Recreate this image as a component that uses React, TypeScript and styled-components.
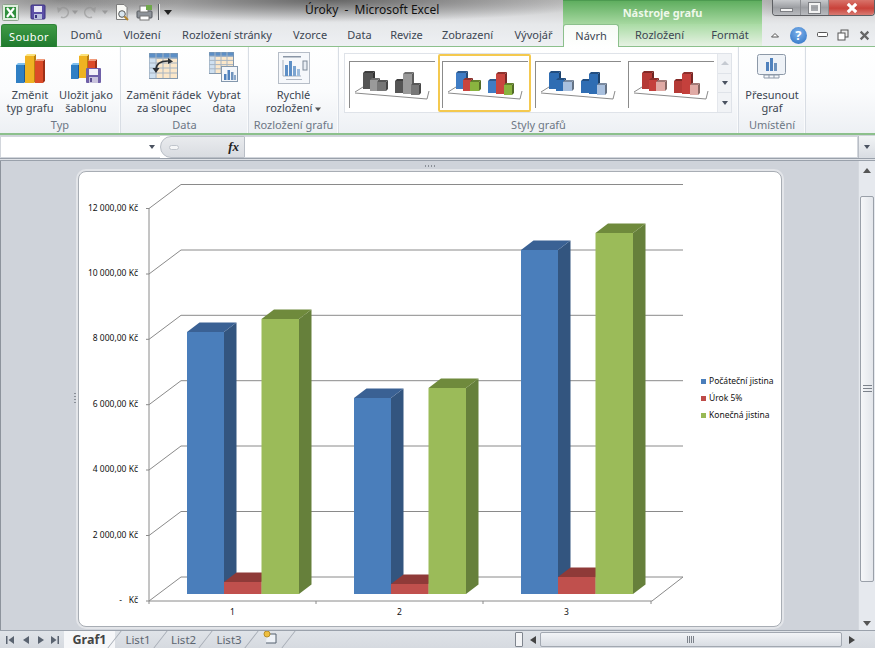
import React from "react";
import styled, { createGlobalStyle } from "styled-components";

const Global = createGlobalStyle`
  html, body { margin: 0; padding: 0; background: #cfd3da; }
  * { box-sizing: border-box; }
`;
const UI = `"Noto Sans", "Open Sans", sans-serif`;

const Page = styled.div`
  width: 875px; height: 648px; overflow: hidden; display: flex; flex-direction: column;
  font-family: ${UI}; font-size: 11px; color: #3b4450; background: #cfd3da;
`;
const TitleBar = styled.div`
  height: 24px; display: flex; flex: none;
  background:
    radial-gradient(ellipse 280px 22px at 330px 0, rgba(70,70,70,.75), rgba(90,90,90,0) 100%),
    radial-gradient(ellipse 120px 20px at 60px 0, rgba(90,90,90,.55), rgba(90,90,90,0) 100%),
    radial-gradient(ellipse 70px 20px at 800px 0, rgba(100,100,100,.4), rgba(90,90,90,0) 100%),
    linear-gradient(#c4c4c4, #e6e8ea);
`;
const Qat = styled.div`width: 305px; display: flex; align-items: center; flex: none; position: relative;`;
const QatSlot = styled.div<{ $w: number; $o?: number }>`
  width: ${p => p.$w}px; height: 22px; display: flex; align-items: center; justify-content: center;
  flex: none; opacity: ${p => p.$o ?? 1};
`;
const QatSep = styled.span`width: 1px; height: 16px; background: #5c6066; box-shadow: 1px 0 0 #e8e8e8;`;
const Title = styled.div`
  width: 258px; flex: none; line-height: 20px; font-size: 12px; color: #111; white-space: pre;
`;
const ContextHead = styled.div`
  width: 199px; flex: none; text-align: center; line-height: 24px; font-size: 11px; font-weight: 700;
  color: #eef8ea; background: linear-gradient(#5fae5f, #a6d8a0);
  border-top: 1px solid #4c9a50;
`;
const WinButtons = styled.div`
  margin-left: 10px; width: 103px; height: 16px; display: flex; flex: none;
  border: 1px solid #5d5f63; border-top: none; border-radius: 0 0 4px 4px; overflow: hidden;
`;
const WinBtn = styled.div<{ $w: number; $close?: boolean }>`
  width: ${p => p.$w}px; flex: none; display: flex; align-items: center; justify-content: center;
  border-right: 1px solid #8c8e92;
  background: ${p => p.$close
    ? "linear-gradient(#d8736a, #c9423a 55%, #d97b72)"
    : "linear-gradient(#c7c9cc, #9d9fa3 50%, #b9bbbf)"};
`;
const MinGlyph = styled.span`width: 13px; height: 4px; background: #f4f4f4; border: 1px solid #7d7f83; margin-top: 5px;`;
const MaxGlyph = styled.span`width: 11px; height: 10px; background: transparent; border: 2px solid #f2f2f2; outline: 1px solid #7d7f83;`;

const TabRow = styled.div`
  height: 23px; display: flex; flex: none; background: linear-gradient(#e6e8ea, #eef0f3);
  border-bottom: 1px solid #8cc08c; padding-left: 1px; position: relative;
`;
const FileTab = styled.div`
  width: 56px; height: 23px; text-align: center; line-height: 23px; font-size: 11px; color: #fff;
  letter-spacing: .4px; border-radius: 3px 3px 0 0; background: linear-gradient(#3f9a45, #1f7a2d);
  border: 1px solid #2f8438; border-bottom: none; flex: none;
`;
const Tab = styled.div<{ $w: number }>`
  width: ${p => p.$w}px; flex: none; text-align: center; line-height: 22px; color: #3c4652; font-size: 11px;
`;
const ContextTabs = styled.div`
  display: flex; width: 199px; flex: none; margin-left: 3px; background: linear-gradient(#a9dba4, #e6f2e3);
`;
const ActiveTab = styled(Tab)`
  height: 23px; background: linear-gradient(#f6fbf5, #ffffff); border: 1px solid #8cc08c; border-bottom: none;
  border-radius: 3px 3px 0 0; line-height: 21px; position: relative; z-index: 1;
`;
const HelpRow = styled.div`
  margin-left: auto; width: 113px; display: flex; align-items: center; justify-content: space-between;
  padding: 0 5px 0 8px;
`;
const HelpDot = styled.div`
  width: 17px; height: 17px; border-radius: 50%; color: #fff; font-weight: 700; font-size: 13px; line-height: 17px;
  text-align: center; background: radial-gradient(circle at 50% 35%, #7fb3ea, #2a6fc4);
`;

const Ribbon = styled.div`
  height: 88px; flex: none; display: flex; background: linear-gradient(#ffffff, #fbfcfd 50%, #edf0f4);
  border-bottom: 2px solid #8cc08c;
`;
const Group = styled.div<{ $w: number }>`
  width: ${p => p.$w}px; flex: none; display: flex; flex-direction: column; align-items: stretch;
  border-right: 1px solid #d8dde4; box-shadow: inset -1px 0 0 #fafbfc;
`;
const GroupBody = styled.div<{ $gap?: number; $pr?: number; $start?: boolean }>`
  height: 71px; display: flex; justify-content: ${p => p.$start ? "flex-start" : "center"};
  gap: ${p => p.$gap ?? 0}px; padding-right: ${p => p.$pr ?? 0}px; flex: none;
`;
const GroupLabel = styled.div`
  text-align: center; line-height: 14px; font-size: 11px; color: #6d7785; white-space: nowrap;
`;
const BigButton = styled.div<{ $w: number }>`
  width: ${p => p.$w}px; flex: none; display: flex; flex-direction: column; align-items: center; padding-top: 5px;
`;
const IconBox = styled.div`height: 36px; flex: none; display: flex; align-items: flex-start; justify-content: center;`;
const BtnText = styled.div`
  text-align: center; line-height: 13px; font-size: 11px; color: #3c4652; white-space: nowrap;
`;
const Gallery = styled.div`
  margin: 6px 0 0 5px; width: 388px; height: 60px; display: flex; border: 1px solid #dfe3e9; background: #fff; flex: none;
`;
const Thumb = styled.div<{ $on?: boolean }>`
  width: 93px; flex: none; height: 58px; background: #fff;
  outline: ${p => p.$on ? "2px solid #f4c94f" : "none"}; outline-offset: -2px; border-radius: 2px;
`;
const GalleryScroll = styled.div`
  width: 14px; flex: none; display: flex; flex-direction: column; border-left: 1px solid #e4e7ec; background: #f1f3f6;
`;
const GalleryBtn = styled.div`
  flex: 1; display: flex; align-items: center; justify-content: center; border-bottom: 1px solid #dfe3e9;
  &:last-child { border-bottom: none; }
`;
const Up = styled.span<{ $c?: string }>`width: 0; height: 0; border: 4px solid transparent; border-top: none; border-bottom: 4px solid ${p => p.$c ?? "#c5cad1"};`;
const Down = styled.span<{ $c?: string }>`width: 0; height: 0; border: 3.5px solid transparent; border-bottom: none; border-top: 4px solid ${p => p.$c ?? "#4a5260"};`;

const FormulaBar = styled.div`
  height: 23px; flex: none; display: flex; background: #fff; border-bottom: 1px solid #9aa1ab; margin-top: 1px;
`;
const NameBox = styled.div`width: 160px; flex: none; display: flex; align-items: center; justify-content: flex-end; padding-right: 5px; border: 1px solid #d2d6dc; border-right: none;`;
const FxBox = styled.div`
  width: 85px; flex: none; display: flex; align-items: center; justify-content: space-between; padding: 0 5px 0 6px;
  background: linear-gradient(#e9ebee, #d9dce1); border-radius: 11px 0 0 11px; border: 1px solid #b9bec6;
`;
const FxKnob = styled.span`width: 10px; height: 5px; border-radius: 3px; background: #f5f6f7; border: 1px solid #bfc4cb; margin-left: 2px;`;
const Fx = styled.span`font-family: "Liberation Serif", serif; font-style: italic; font-weight: 700; font-size: 13px; color: #222;`;
const FormulaInput = styled.div`flex: 1; border: 1px solid #d2d6dc; border-left: none;`;
const ExpandBtn = styled.div`width: 17px; flex: none; display: flex; align-items: center; justify-content: center; background: linear-gradient(#f2f4f6, #d8dce2); border-left: 1px solid #b9bec6;`;
const Gap = styled.div`height: 2px; flex: none; background: #dfe2e7; border-bottom: 1px solid #9aa1ab;`;

const Workspace = styled.div`flex: 1; display: flex; min-height: 0;`;
const Sheet = styled.div`
  flex: 1; padding: 10px 0 0 78px; background: #cfd3da; position: relative;
  border-left: 1px solid #8d939c;
`;
const Handle = styled.span<{ $l: number; $t: number; $v?: boolean }>`
  position: absolute; left: ${p => p.$l}px; top: ${p => p.$t}px;
  width: ${p => p.$v ? 2 : 12}px; height: ${p => p.$v ? 12 : 2}px;
  background-image: ${p => p.$v
    ? "repeating-linear-gradient(#8a8f97 0 1px, transparent 1px 3px)"
    : "repeating-linear-gradient(90deg, #8a8f97 0 1px, transparent 1px 3px)"};
`;
const ChartFrame = styled.div`
  width: 704px; height: 456px; background: #fff; border: 1px solid #a8adb4; border-radius: 8px; overflow: hidden;
  margin-left: -1px; box-shadow: 0 0 0 2px #e3e5e9;
`;
const ChartSvg = styled.svg`display: block;`;
const VScroll = styled.div`
  width: 17px; flex: none; display: flex; flex-direction: column; background: #e6e9ee; border-left: 1px solid #d4d8de;
`;
const VArrow = styled.div<{ $h: number; $end?: boolean }>`
  height: ${p => p.$h}px; flex: none; display: flex; justify-content: center;
  align-items: ${p => p.$end ? "flex-end" : "center"}; padding-bottom: ${p => p.$end ? 3 : 0}px;
`;
const VTrack = styled.div`flex: 1; padding: 17px 1px 30px 1px; display: flex;`;
const VThumb = styled.div`
  flex: 1; border: 1px solid #9aa0a9; border-radius: 2px; background: linear-gradient(90deg, #f6f7f9, #e3e6eb);
  display: flex; align-items: center; justify-content: center;
`;
const Grip = styled.span`width: 9px; height: 8px; background: repeating-linear-gradient(#7c828b 0 1px, transparent 1px 3px);`;

const BottomBar = styled.div`
  height: 18px; flex: none; display: flex; align-items: stretch; background: linear-gradient(#dfe3e8, #d6dae0);
  border-top: 1px solid #9aa1ab; position: relative;
`;
const NavBtns = styled.div`width: 64px; flex: none; display: flex; align-items: center; gap: 7px; padding-left: 6px;`;
const SheetTab = styled.div<{ $w: number; $on?: boolean }>`
  width: ${p => p.$w}px; flex: none; position: relative; text-align: center; line-height: 17px;
  font-size: ${p => p.$on ? 12.5 : 11.5}px; font-weight: ${p => p.$on ? 700 : 400};
  color: ${p => p.$on ? "#444" : "#5c6570"}; background: ${p => p.$on ? "#f6f7f9" : "transparent"};
  &::after {
    content: ""; position: absolute; right: 0; top: 0; width: 1px; height: 17px; background: #a4aab3;
    transform: skewX(-38deg);
  }
`;
const HSpacer = styled.div`flex: 1;`;
const SplitBox = styled.div`width: 8px; height: 15px; margin: 1px 0; flex: none; border: 1px solid #7f858e; background: #f3f4f6; border-radius: 1px;`;
const HArrow = styled.div<{ $w: number }>`width: ${p => p.$w}px; flex: none; display: flex; align-items: center; justify-content: center;`;
const HThumb = styled.div`
  width: 302px; flex: none; margin: 1px 0; border: 1px solid #a2a8b1; border-radius: 2px;
  background: linear-gradient(#f2f4f7, #d9dde3); display: flex; align-items: center; justify-content: center;
`;
const HGrip = styled.span`width: 8px; height: 7px; background: repeating-linear-gradient(90deg, #7c828b 0 1px, transparent 1px 2px);`;

const Tri = ({ d, c = "#444", s = 8 }: { d: "l" | "r" | "u" | "d"; c?: string; s?: number }) => {
  const pts = { l: "8,0 8,8 2,4", r: "2,0 2,8 8,4", u: "0,7 8,7 4,2", d: "0,2 8,2 4,7" }[d];
  return <svg width={s} height={s} viewBox="0 0 8 8"><polygon points={pts} fill={c} /></svg>;
};
const Skip = ({ d, c }: { d: "l" | "r"; c: string }) => (
  <svg width="8" height="8" viewBox="0 0 8 8">
    {d === "l"
      ? <g fill={c}><rect x="0" y="0" width="1.5" height="8" /><polygon points="8,0 8,8 2.5,4" /></g>
      : <g fill={c}><rect x="6.5" y="0" width="1.5" height="8" /><polygon points="0,0 0,8 5.5,4" /></g>}
  </svg>
);

/* ---------- icons ---------- */
const Bar3 = ({ x, y, w, h, c, top, side, dx = 2, dy = 2 }: any) => (
  <g>
    <polygon points={`${x + w},${y} ${x + w + dx},${y - dy} ${x + w + dx},${y + h - dy} ${x + w},${y + h}`} fill={side} />
    <polygon points={`${x},${y} ${x + dx},${y - dy} ${x + w + dx},${y - dy} ${x + w},${y}`} fill={top} />
    <rect x={x} y={y} width={w} height={h} fill={c} />
  </g>
);
const ColumnsIcon = () => (
  <svg width="30" height="32" viewBox="0 0 30 32">
    <Bar3 x={1} y={13} w={8} h={18} c="#2f7fc4" top="#7fc0ee" side="#1d5a96" />
    <Bar3 x={10} y={4} w={9} h={27} c="#efb322" top="#fbe27a" side="#b97f10" />
    <Bar3 x={20} y={9} w={8} h={22} c="#dc4b28" top="#f29a7a" side="#9d2f16" />
  </svg>
);
const SaveTemplateIcon = () => (
  <svg width="32" height="32" viewBox="0 0 32 32">
    <Bar3 x={1} y={13} w={7} h={14} c="#2f7fc4" top="#7fc0ee" side="#1d5a96" />
    <Bar3 x={9} y={4} w={8} h={22} c="#efb322" top="#fbe27a" side="#b97f10" />
    <Bar3 x={18} y={9} w={7} h={12} c="#dc4b28" top="#f29a7a" side="#9d2f16" />
    <rect x="16" y="16" width="15" height="15" rx="1" fill="#6f60a8" />
    <rect x="19" y="17" width="9" height="6" fill="#f3f1f8" />
    <rect x="19" y="25" width="9" height="6" fill="#c9c3dd" />
    <rect x="20" y="26" width="2" height="4" fill="#5a4d8e" />
  </svg>
);
const TableBase = ({ x, y, w, h }: any) => {
  const cx = [1, 2, 3].map(i => x + (w * i) / 4);
  const cy = [1, 2, 3, 4].map(i => y + (h * i) / 5);
  return (
    <g>
      <rect x={x + .5} y={y + .5} width={w} height={h} fill="#fbe7c9" stroke="#8498ad" />
      <rect x={x + .5} y={y + .5} width={w} height={h / 5} fill="#5d8fc6" />
      <rect x={x + .5} y={y + h / 5} width={w / 4} height={(h * 4) / 5} fill="#cfe0f0" />
      {cx.map(v => <line key={v} x1={v} x2={v} y1={y} y2={y + h} stroke="#a7b4c2" />)}
      {cy.map(v => <line key={v} y1={v} y2={v} x1={x} x2={x + w} stroke="#a7b4c2" />)}
    </g>
  );
};
const SwapIcon = () => (
  <svg width="30" height="28" viewBox="0 0 30 28">
    <TableBase x={0} y={1} w={28} h={25} />
    <path d="M7 18 C7 11 13 9 19 9" fill="none" stroke="#2b2f35" strokeWidth="1.6" />
    <polygon points="19,6 24,9.5 19,12" fill="#2b2f35" />
    <polygon points="3.5,16 10.5,16 7,21" fill="#2b2f35" />
  </svg>
);
const SelectDataIcon = () => (
  <svg width="30" height="31" viewBox="0 0 30 31">
    <TableBase x={0} y={0} w={24} h={21} />
    <rect x="12.5" y="14.5" width="16" height="15" fill="#f3f6fa" stroke="#8498ad" />
    <rect x="15" y="22" width="2.5" height="6" fill="#4f81bd" />
    <rect x="18.5" y="18" width="2.5" height="10" fill="#4f81bd" />
    <rect x="22" y="20" width="2.5" height="8" fill="#6f93bd" />
    <rect x="25" y="23" width="2" height="5" fill="#8aa7c9" />
  </svg>
);
const QuickLayoutIcon = () => (
  <svg width="32" height="32" viewBox="0 0 32 32">
    <rect x=".5" y=".5" width="31" height="31" fill="#f6f8fb" stroke="#b6bdc7" />
    <rect x="5" y="4" width="18" height="1.5" fill="#8a96a6" />
    <line x1="5" y1="8" x2="5" y2="24" stroke="#aab3bf" />
    <line x1="5" y1="24" x2="23" y2="24" stroke="#aab3bf" />
    <rect x="7" y="13" width="3" height="11" fill="#5d8fc6" />
    <rect x="11" y="9" width="3" height="15" fill="#5d8fc6" />
    <rect x="15" y="14" width="3" height="10" fill="#7ba4d0" />
    <rect x="19" y="17" width="3" height="7" fill="#9dbcdc" />
    <rect x="25" y="9" width="4" height="9" fill="#e8edf3" stroke="#7e8a99" />
    <rect x="8" y="27" width="16" height="1" fill="#b0b8c3" />
  </svg>
);
const MoveChartIcon = () => (
  <svg width="30" height="28" viewBox="0 0 30 28">
    <rect x=".5" y="2.5" width="28" height="20" rx="2" fill="#eef2f7" stroke="#8d99a8" />
    <rect x="9" y="10" width="3" height="9" fill="#4f81bd" />
    <rect x="13" y="6" width="3" height="13" fill="#4f81bd" />
    <rect x="17" y="11" width="3" height="8" fill="#6f93bd" />
    <path d="M7 23 h15 v3 h-15 z M12 23 v3 M17 23 v3" fill="#f6f8fb" stroke="#8d99a8" />
  </svg>
);
const StyleThumb = ({ colors }: { colors: string[] }) => {
  const shade = (hex: string, f: number) => {
    const n = parseInt(hex.slice(1), 16);
    const ch = (s: number) => Math.round(((n >> s) & 255) * f);
    return `rgb(${ch(16)},${ch(8)},${ch(0)})`;
  };
  const bars = [
    [18, 19, 10, 16, 0], [25, 26, 8, 11, 1], [32, 28, 9, 9, 2],
    [50, 27, 8, 12, 0], [58, 20, 9, 20, 1], [66, 31, 8, 10, 2],
  ];
  return (
    <svg width="93" height="58" viewBox="0 0 93 58">
      <path d="M5 7.5 H90 M4.5 7 V54" stroke="#8b8b8b" fill="none" />
      <path d="M10 38 L18 33 M84 37 L82 45 L10 39" stroke="#8b8b8b" strokeWidth="1" fill="none" />
      {bars.map(([x, y, w, h, i], k) => {
        const c = colors[i];
        return <Bar3 key={k} x={x} y={y} w={w} h={h} c={c} top={shade(c, .72)} side={shade(c, .6)} />;
      })}
    </svg>
  );
};

/* ---------- chart ---------- */
const OX = 79, OY = 172;
const C = {
  blue: ["#4a7ebb", "#3a6194", "#33557f"],
  red: ["#c0504d", "#8f3a38", "#8f3a38"],
  green: ["#9bbb59", "#6f8a3c", "#66803b"],
};
const Col = ({ x, w, top, k }: { x: number; w: number; top: number; k: keyof typeof C }) => {
  const [f, t, s] = C[k];
  const b = 594, dx = 12.5, dy = 9.5;
  return (
    <g>
      <polygon points={`${x + w},${top} ${x + w + dx},${top - dy} ${x + w + dx},${b - dy} ${x + w},${b}`} fill={s} />
      <polygon points={`${x},${top} ${x + dx},${top - dy} ${x + w + dx},${top - dy} ${x + w},${top}`} fill={t} />
      <rect x={x} y={top} width={w} height={b - top} fill={f} />
    </g>
  );
};
const yLabels = ["12 000,00 Kč", "10 000,00 Kč", "8 000,00 Kč", "6 000,00 Kč", "4 000,00 Kč", "2 000,00 Kč"];
const Chart = () => {
  const ys = [208.5, 274, 339.3, 404.7, 470, 535.5, 601];
  const groups = [
    { x: 187, b: 332, r: 582, g: 319 },
    { x: 354, b: 398, r: 584, g: 388 },
    { x: 521, b: 250, r: 577, g: 233 },
  ];
  return (
    <ChartSvg width="702" height="454" viewBox={`${OX} ${OY} 702 454`} fontFamily={UI} fontSize="8.5" fill="#111">
      {ys.map(y => (
        <polyline key={y} points={`146,${y} 149,${y} 181,${y - 24} 683,${y - 24}`} stroke="#8a8a8a" fill="none" />
      ))}
      <line x1="149" x2="149" y1="208" y2="601" stroke="#8a8a8a" />
      <polyline points="149,601 652,601 683,577" fill="none" stroke="#8a8a8a" />
      {[149, 316, 483, 651].map(x => <line key={x} x1={x} x2={x} y1="601" y2="604" stroke="#8a8a8a" />)}
      {groups.map(g => (
        <g key={g.x}>
          <Col x={g.x} w={37} top={g.b} k="blue" />
          <Col x={g.x + 37} w={37.5} top={g.r} k="red" />
          <Col x={g.x + 74.5} w={37.5} top={g.g} k="green" />
        </g>
      ))}
      {yLabels.map((t, i) => <text key={t} x="138" y={ys[i] + 2} textAnchor="end">{t}</text>)}
      <text x="138" y="603" textAnchor="end">{"-\u00a0\u00a0\u00a0Kč"}</text>
      {["1", "2", "3"].map((t, i) => <text key={t} x={232.5 + 167 * i} y="615" textAnchor="middle">{t}</text>)}
      {[["Počáteční jistina", "#4a7ebb", 381], ["Úrok 5%", "#be4b48", 398], ["Konečná jistina", "#98b954", 415]].map(([t, c, y]) => (
        <g key={t as string}>
          <rect x="701" y={(y as number) - 2} width="5" height="5" fill={c as string} />
          <text x="709" y={(y as number) + 3}>{t}</text>
        </g>
      ))}
    </ChartSvg>
  );
};

const ExcelLogo = () => (
  <svg width="17" height="17" viewBox="0 0 17 17">
    <rect x=".5" y=".5" width="16" height="16" rx="1" fill="#dfeede" stroke="#8fa58f" />
    <rect x="3" y="3" width="11" height="11" fill="#2f8f3c" />
    <path d="M5 4 L12 13 M12 4 L5 13" stroke="#fff" strokeWidth="2.2" />
  </svg>
);
const SaveIcon = () => (
  <svg width="16" height="16" viewBox="0 0 16 16">
    <rect x="1" y="1" width="14" height="14" rx="1" fill="#5b4fa6" stroke="#3c3380" />
    <rect x="4" y="2" width="8" height="6" fill="#e8e8f4" />
    <rect x="4" y="10" width="8" height="5" fill="#b9c0dc" />
    <rect x="5" y="11" width="2" height="3" fill="#3c3380" />
  </svg>
);
const ArrowGhost = ({ flip }: { flip?: boolean }) => (
  <svg width="14" height="14" viewBox="0 0 14 14" style={flip ? { transform: "scaleX(-1)" } : undefined}>
    <path d="M3 5 A5 5 0 1 1 5 12" fill="none" stroke="#8f8f8f" strokeWidth="1.6" />
    <polygon points="1,2 6,4 2,8" fill="#8f8f8f" />
  </svg>
);
const PreviewIcon = () => (
  <svg width="16" height="18" viewBox="0 0 16 18">
    <path d="M2.5 1.5 H10 L13 4.5 V16.5 H2.5 Z" fill="#f9f9f6" stroke="#7d7d7d" />
    <circle cx="8" cy="11" r="3.3" fill="#d9e6ef" stroke="#555" />
    <line x1="10.5" y1="13.5" x2="14" y2="17" stroke="#b5862d" strokeWidth="2" />
  </svg>
);
const PrintIcon = () => (
  <svg width="17" height="17" viewBox="0 0 17 17">
    <rect x="1" y="7" width="15" height="7" rx="1" fill="#8d9299" stroke="#55595f" />
    <rect x="4" y="2" width="8" height="6" fill="#fff" stroke="#777" />
    <rect x="4" y="12" width="9" height="4" fill="#fff" stroke="#777" />
    <rect x="10" y="1" width="6" height="5" fill="#6fa84a" />
  </svg>
);

const Xs = ({ c, s = 10, w = 2 }: { c: string; s?: number; w?: number }) => (
  <svg width={s} height={s} viewBox="0 0 10 10"><path d="M1.5 1.5 L8.5 8.5 M8.5 1.5 L1.5 8.5" stroke={c} strokeWidth={w} /></svg>
);

export default function App() {
  return (
    <Page>
      <Global />
      <TitleBar>
        <Qat>
          <QatSlot $w={20}><ExcelLogo /></QatSlot>
          <QatSlot $w={35}><SaveIcon /></QatSlot>
          <QatSlot $w={15} $o={.55}><ArrowGhost /></QatSlot>
          <QatSlot $w={10} $o={.5}><Tri d="d" s={6} c="#777" /></QatSlot>
          <QatSlot $w={20} $o={.55}><ArrowGhost flip /></QatSlot>
          <QatSlot $w={10} $o={.5}><Tri d="d" s={6} c="#777" /></QatSlot>
          <QatSlot $w={23}><PreviewIcon /></QatSlot>
          <QatSlot $w={22}><PrintIcon /></QatSlot>
          <QatSlot $w={7}><QatSep /></QatSlot>
          <QatSlot $w={11}><Tri d="d" s={8} c="#222" /></QatSlot>
        </Qat>
        <Title>Úroky  -  Microsoft Excel</Title>
        <ContextHead>Nástroje grafu</ContextHead>
        <WinButtons>
          <WinBtn $w={28}><MinGlyph /></WinBtn>
          <WinBtn $w={28}><MaxGlyph /></WinBtn>
          <WinBtn $w={47} $close><Xs c="#fff" s={12} w={2.6} /></WinBtn>
        </WinButtons>
      </TitleBar>

      <TabRow>
        <FileTab>Soubor</FileTab>
        <Tab $w={59}>Domů</Tab>
        <Tab $w={52}>Vložení</Tab>
        <Tab $w={118}>Rozložení stránky</Tab>
        <Tab $w={48}>Vzorce</Tab>
        <Tab $w={51}>Data</Tab>
        <Tab $w={43}>Revize</Tab>
        <Tab $w={79}>Zobrazení</Tab>
        <Tab $w={53}>Vývojář</Tab>
        <ContextTabs>
          <ActiveTab $w={56}>Návrh</ActiveTab>
          <Tab $w={81}>Rozložení</Tab>
          <Tab $w={60}>Formát</Tab>
        </ContextTabs>
        <HelpRow>
          <svg width="10" height="8" viewBox="0 0 10 8"><path d="M1.5 6 L5 2.5 L8.5 6 Z" fill="#fff" stroke="#555" /></svg>
          <HelpDot>?</HelpDot>
          <svg width="11" height="6" viewBox="0 0 11 6"><rect x=".5" y=".5" width="10" height="4" rx="1" fill="#fff" stroke="#555" /></svg>
          <svg width="12" height="12" viewBox="0 0 12 12"><rect x="4" y="1" width="7" height="7" fill="#eee" stroke="#555" /><rect x="1" y="4" width="7" height="7" fill="#fff" stroke="#555" /></svg>
          <Xs c="#666" s={11} />
        </HelpRow>
      </TabRow>

      <Ribbon>
        <Group $w={121}>
          <GroupBody $pr={3}>
            <BigButton $w={55}><IconBox><ColumnsIcon /></IconBox><BtnText>Změnit<br />typ grafu</BtnText></BigButton>
            <BigButton $w={57}><IconBox><SaveTemplateIcon /></IconBox><BtnText>Uložit jako<br />šablonu</BtnText></BigButton>
          </GroupBody>
          <GroupLabel>Typ</GroupLabel>
        </Group>
        <Group $w={128}>
          <GroupBody $gap={1}>
            <BigButton $w={78}><IconBox><SwapIcon /></IconBox><BtnText>Zaměnit řádek<br />za sloupec</BtnText></BigButton>
            <BigButton $w={40}><IconBox><SelectDataIcon /></IconBox><BtnText>Vybrat<br />data</BtnText></BigButton>
          </GroupBody>
          <GroupLabel>Data</GroupLabel>
        </Group>
        <Group $w={90}>
          <GroupBody>
            <BigButton $w={80}><IconBox><QuickLayoutIcon /></IconBox><BtnText>Rychlé<br />rozložení <Tri d="d" s={6} c="#555" /></BtnText></BigButton>
          </GroupBody>
          <GroupLabel>Rozložení grafu</GroupLabel>
        </Group>
        <Group $w={400}>
          <GroupBody $start>
            <Gallery>
              <Thumb><StyleThumb colors={["#555555", "#9a9a9a", "#777777"]} /></Thumb>
              <Thumb $on><StyleThumb colors={["#3f7cc4", "#c9453f", "#8ab43f"]} /></Thumb>
              <Thumb><StyleThumb colors={["#2f6db3", "#2f6db3", "#a9c0de"]} /></Thumb>
              <Thumb><StyleThumb colors={["#b53a36", "#c4403c", "#e0aaa5"]} /></Thumb>
              <GalleryScroll>
                <GalleryBtn><Up /></GalleryBtn>
                <GalleryBtn><Down /></GalleryBtn>
                <GalleryBtn><Down /></GalleryBtn>
              </GalleryScroll>
            </Gallery>
          </GroupBody>
          <GroupLabel>Styly grafů</GroupLabel>
        </Group>
        <Group $w={67}>
          <GroupBody>
            <BigButton $w={64}><IconBox><MoveChartIcon /></IconBox><BtnText>Přesunout<br />graf</BtnText></BigButton>
          </GroupBody>
          <GroupLabel>Umístění</GroupLabel>
        </Group>
      </Ribbon>

      <FormulaBar>
        <NameBox><Down c="#222" /></NameBox>
        <FxBox><FxKnob /><Fx>fx</Fx></FxBox>
        <FormulaInput />
        <ExpandBtn><Down c="#555" /></ExpandBtn>
      </FormulaBar>
      <Gap />

      <Workspace>
        <Sheet>
          <Handle $l={424} $t={4} />
          <Handle $l={73} $t={232} $v />
          <ChartFrame><Chart /></ChartFrame>
        </Sheet>
        <VScroll>
          <VArrow $h={18}><Tri d="u" c="#555" /></VArrow>
          <VTrack><VThumb><Grip /></VThumb></VTrack>
          <VArrow $h={18} $end><Tri d="d" c="#555" /></VArrow>
        </VScroll>
      </Workspace>

      <BottomBar>
        <NavBtns>
          <Skip d="l" c="#5a6370" />
          <Tri d="l" s={8} c="#5a6370" />
          <Tri d="r" s={8} c="#5a6370" />
          <Skip d="r" c="#5a6370" />
        </NavBtns>
        <SheetTab $w={51} $on>Graf1</SheetTab>
        <SheetTab $w={46}>List1</SheetTab>
        <SheetTab $w={45}>List2</SheetTab>
        <SheetTab $w={46}>List3</SheetTab>
        <SheetTab $w={37}>
          <svg width="16" height="14" viewBox="0 0 16 14"><path d="M4 3 H13 V12 H3" fill="#eef2f7" stroke="#55606e" /><circle cx="4" cy="3" r="3" fill="#f0c040" stroke="#b8902a" /></svg>
        </SheetTab>
        <HSpacer />
        <SplitBox />
        <HArrow $w={17}><Tri d="l" c="#444" /></HArrow>
        <HThumb><HGrip /></HThumb>
        <HArrow $w={17}><Tri d="r" c="#444" /></HArrow>
        <HArrow $w={16} />
      </BottomBar>
    </Page>
  );
}
